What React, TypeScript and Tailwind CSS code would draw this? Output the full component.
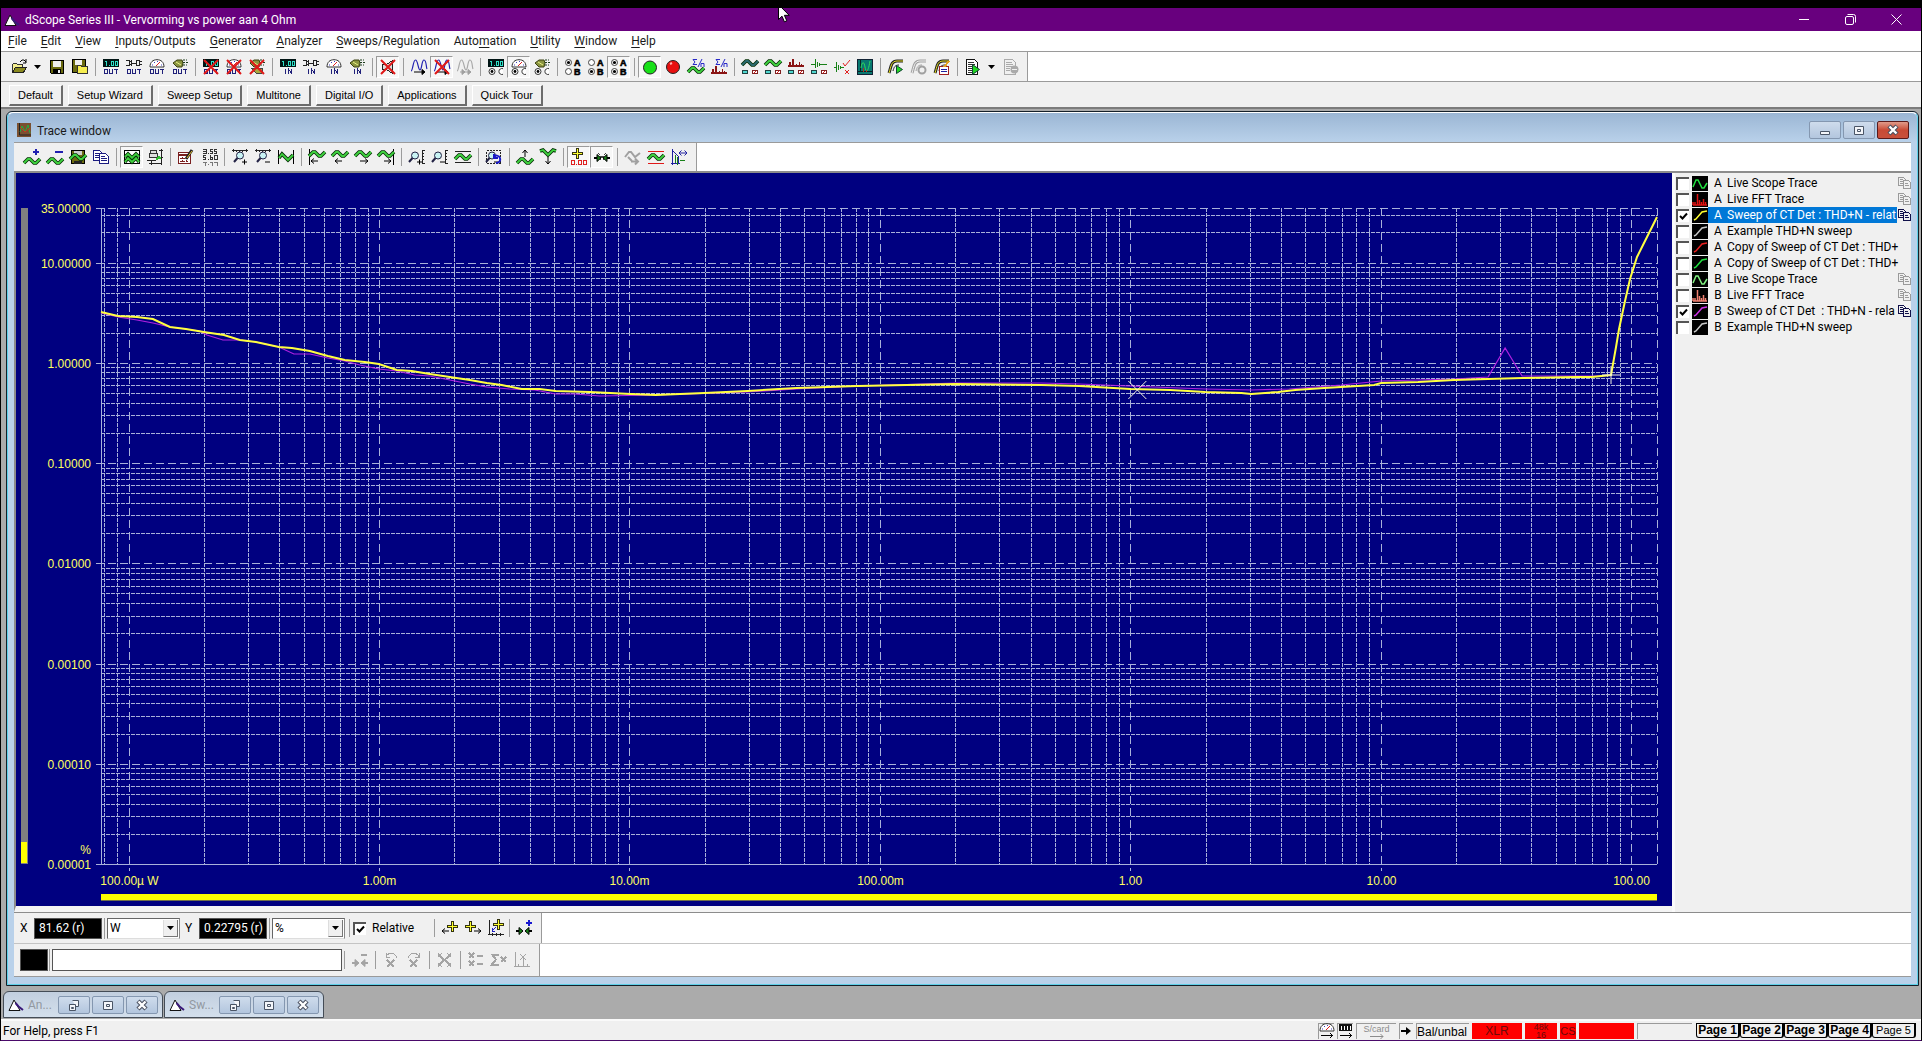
import { useLayoutEffect, useRef, useState } from 'react';
import type { ReactNode } from 'react';
import clsx from 'clsx';

type Point = [number, number];

/* ---------- icon building blocks ---------- */

function Ico({ children }: { children: ReactNode }) {
  return (
    <svg width="16" height="16" viewBox="0 0 16 16" fill="none" shapeRendering="crispEdges" className="shrink-0 overflow-visible" aria-hidden="true">
      {children}
    </svg>
  );
}

function Wave({ y = 0, x = 0, color = '#3fd23f', d = 'M0 11L4 7H6L10 11H12L16 7' }: { y?: number; x?: number; color?: string; d?: string }) {
  return (
    <g transform={`translate(${x} ${y})`} shapeRendering="auto">
      <path d={d} stroke="#063006" strokeWidth="3.6" />
      <path d={d} stroke={color} strokeWidth="1.8" />
    </g>
  );
}

const Digits = () => (
  <>
    <path d="M0 0h16v8H0z" fill="#001414" />
    <path d="M2 2.500h1.500M3.500 2v5M6 6.500h1M8.500 2.500h2v4h-2zM12.500 2.500h2v4h-2z" stroke="#2fe0c8" />
  </>
);

const Plug = () => (
  <path d="M0 1.500h3v5H0M3 2.500h2M3 5.500h2M5.500 1v6M6 4h4M10.500 1v6M11 1.500h2v5h-2M13 2.500h3M13 5.500h3" stroke="#222" />
);

const Meter = () => (
  <g shapeRendering="auto">
    <path d="M1 8C1 3 4 .7 8 .7S15 3 15 8z" fill="#fff" stroke="#333" />
    <path d="M7 7l4-4" stroke="#e02020" />
    <path d="M3 6h1M5 3.500h1M8 2.500h1M12 6h1" stroke="#4040c0" />
  </g>
);

const Speaker = () => (
  <g shapeRendering="auto">
    <path d="M1 4l4-3h5l1 3-1 4H5z" fill="#8a9440" stroke="#3a4010" />
    <path d="M4 3l5 3" stroke="#e8f080" />
    <path d="M11 1h4M11 3.500h5M11 6h4" stroke="#1b3b1b" strokeDasharray="2 1" />
  </g>
);

const Out = () => (
  <path d="M1.500 10.500h3v4h-3zM6.500 10v4.500h3V10M11 10.500h4M13 10v5" stroke="#20207a" />
);
const In = () => <path d="M5.500 10v5M8.500 15v-5l3 4.500V10" stroke="#20207a" />;

const Radios = () => (
  <g shapeRendering="auto">
    <circle cx="4" cy="12.500" r="3" fill="#fff" stroke="#333" />
    <circle cx="4" cy="12.500" r="1.400" fill="#000" />
    <path d="M15 9.700a3 3 0 1 0 0 5.600" fill="#fff" stroke="#333" />
  </g>
);

const RedCross = () => <path d="M1 1l14 14M15 1L1 15" stroke="#e01818" strokeWidth="2" shapeRendering="auto" />;

function AB({ top, bottom }: { top: boolean; bottom: boolean }) {
  return (
    <Ico>
      <g shapeRendering="auto">
        <circle cx="3.500" cy="3.500" r="3" fill="#fff" stroke="#444" />
        <circle cx="3.500" cy="12.500" r="3" fill="#fff" stroke="#444" />
        {top && <circle cx="3.500" cy="3.500" r="1.600" fill="#000" />}
        {bottom && <circle cx="3.500" cy="12.500" r="1.600" fill="#000" />}
      </g>
      <g fill="#000" stroke="#000" strokeWidth=".6" className="font-['Liberation_Sans',Arial,sans-serif] text-[9px] font-bold">
        <text x="9" y="7">A</text>
        <text x="9" y="16">B</text>
      </g>
    </Ico>
  );
}

const Floppy = () => (
  <Ico>
    <path d="M1.500 1.500h13v13h-12l-1-1z" fill="#6b6b10" stroke="#000" />
    <path d="M4 2h8v6H4z" fill="#efefef" />
    <path d="M4 10h8v5H4z" fill="#000" />
    <path d="M9 11h2v3H9z" fill="#efefef" />
  </Ico>
);

const OpenIcon = () => (
  <Ico>
    <path d="M1.500 13V5.500l1-1h3l1 1h5V8" fill="#f4ef90" stroke="#333" />
    <path d="M1.500 13.500L4.500 8.500h11l-3 5z" fill="#8a8a20" stroke="#222" />
    <path d="M9 3l2-2h2l2 2M15 0v4h-3" stroke="#000" shapeRendering="auto" />
  </Ico>
);

const SaveOpen = () => (
  <Ico>
    <path d="M.5.500h13v13h-13z" fill="#6b6b10" stroke="#000" />
    <path d="M3 1h7v5H3z" fill="#efefef" />
    <path d="M5.500 14.500v-8h3l1 1h6v7z" fill="#f6ee50" stroke="#333" />
  </Ico>
);

const Doc = () => (
  <Ico>
    <path d="M.5 1.500h6l3 3v7h-9z" fill="#fff" stroke="#1b1b80" />
    <path d="M2 4.500h4M2 6.500h5M2 8.500h5" stroke="#1b1b80" />
    <path d="M6.500 4.500h6l3 3v7h-9z" fill="#fff" stroke="#1b1b80" />
    <path d="M8 7.500h4M8 9.500h6M8 11.500h6" stroke="#1b1b80" />
  </Ico>
);

// Small copy glyph at the end of a trace row
const RowCopy = ({ color }: { color: string }) => (
  <svg width="13" height="12" viewBox="0 0 13 12" fill="#f0f0f0" stroke={color} shapeRendering="crispEdges" className="shrink-0" aria-hidden="true">
    <path d="M.5.500h5l2 2v6h-7zM2 2.500h3M2 4.500h4M2 6.500h3" />
    <path d="M5.500 3.500h5l2 2v6h-7zM7 6.500h3M7 8.500h4" />
  </svg>
);

function SineStep({ color = '#2020b0', arrow = '#000', crossed = false, twice = false }: { color?: string; arrow?: string; crossed?: boolean; twice?: boolean }) {
  return (
    <Ico>
      <g shapeRendering="auto">
        <path d="M0 12C2 12 2 1 4.500 1S7 11 9 11 10.500 1 13 1s2 7 3 9" stroke={color} strokeWidth="1.200" />
        <path d="M3 13h10M11 10.500l3 2.500-3 2.500z" stroke={arrow} fill={arrow} />
        {twice && <path d="M5 10.500l3 2.500-3 2.500z" fill={arrow} stroke={arrow} />}
      </g>
      {crossed && <RedCross />}
    </Ico>
  );
}

const SigmaN = () => (
  <path d="M7 .5H3l2 2.500-2 2.500h4M12 0L8 8M11 8V4.500h3V8" stroke="#2828c8" shapeRendering="auto" transform="translate(2 0)" />
);

const Spectrum = ({ y = 0 }: { y?: number }) => (
  <path transform={`translate(0 ${y})`} d="M0 8h16v-2h-2V5h-1v1h-1V3h-1v3h-2V5H8v1H6V0H4v6H3V3H1v3H0z" fill="#8a1414" />
);

const Chips = () => (
  <>
    <path d="M.5 11.500h5v3h-5z" fill="#4fd8d0" stroke="#204040" />
    <path d="M10.500 11.500h5v3h-5z" fill="#fff" stroke="#802020" />
    <path d="M12 14l2-2" stroke="#e02020" />
  </>
);

const Impulse = () => <path d="M0 5.500h4M4.500 0v9M6.500 3v5M8.500 4v3M9 5.500h7" stroke="#188018" />;

const Magnifier = ({ sign, x = 0 }: { sign: string; x?: number }) => (
  <g shapeRendering="auto" transform={`translate(${x} 0)`}>
    <circle cx="7" cy="6.500" r="3.500" fill="#c9f4f4" stroke="#224" />
    <path d="M4.500 9L1 13" stroke="#224" strokeWidth="2" />
    <path d={sign === '+' ? 'M9 13h5M11.500 10.500v5' : 'M9 13h5'} stroke="#000" />
  </g>
);

const RulerTop = () => <path d="M0 1.500h16M1.500 0v3M4.500 2v1M7.500 2v1M10.500 2v1M14.500 0v3" stroke="#222" />;
const RulerRight = () => <path d="M13.500 1v14M14 1.500h2M14 4.500h1M14 7.500h1M14 10.500h1M14 14.500h2" stroke="#222" />;

const Cursor = ({ x = 0, y = 0, color = '#ffff30' }: { x?: number; y?: number; color?: string }) => (
  <g transform={`translate(${x} ${y})`}>
    <path d="M5.500 0v11M0 5.500h11" stroke="#333310" strokeWidth="3" />
    <path d="M5.500 1v9M1 5.500h9" stroke={color} />
  </g>
);

const Sweep = ({ color = '#e8e020', edge = '#222' }: { color?: string; edge?: string }) => (
  <g shapeRendering="auto">
    <path d="M1 14C3 8 3 2 9 2h6" stroke={edge} strokeWidth="3" />
    <path d="M1 14C3 8 3 2 9 2h6" stroke={color} />
    <path d="M5 12c1-4 2-6 6-6" stroke={edge} />
  </g>
);

const Squeeze = ({ color = '#188018', mark = '#000' }: { color?: string; mark?: string }) => (
  <g shapeRendering="auto">
    <path d="M0 9h5M11 9h5" stroke={mark} strokeWidth="2" />
    <path d="M3 5.500L7 9l-4 3.500zM13 5.500L9 9l4 3.500z" fill={color} stroke={mark} />
  </g>
);

const AppLogo = () => (
  <svg width="16" height="14" viewBox="0 0 16 14" fill="none" className="shrink-0" aria-hidden="true">
    <path d="M1 12.500L6 2l6 10.500z" fill="#fff" stroke="#111" />
    <path d="M7.500 5l3 3.500 4.500 3.500" stroke="#3b1a7a" strokeWidth="2" />
  </svg>
);

/* ---------- toolbar parts ---------- */

function Tool({ label, pressed, children }: { label: string; pressed?: boolean; children: ReactNode }) {
  return (
    <button
      type="button"
      aria-label={label}
      title={label}
      aria-pressed={pressed}
      className={clsx(
        'flex h-[22px] w-[23px] shrink-0 items-center justify-center border',
        pressed ? 'border-b-white border-l-[#9a9a9a] border-r-white border-t-[#9a9a9a] bg-[#f7f7f7]' : 'border-transparent',
      )}
    >
      {children}
    </button>
  );
}

const Sep = () => <span className="ml-1 mr-[3px] h-[18px] w-px shrink-0 self-center bg-[#9c9c9c]" />;

function MenuArrow() {
  return (
    <button type="button" aria-label="More" className="flex h-[22px] w-[15px] shrink-0 items-center justify-center">
      <svg width="7" height="4" viewBox="0 0 7 4" aria-hidden="true">
        <path d="M0 0h7L3.500 4z" fill="#000" />
      </svg>
    </button>
  );
}

function MainToolbar() {
  return (
    <div role="toolbar" aria-label="Main" className="flex h-[30px] shrink-0 border-b border-[#9a9a9a] bg-white">
      <div className="flex items-center border-r border-[#9a9a9a] bg-[#f0f0f0] pl-[6px] pr-[5px]">
        <Tool label="Open"><OpenIcon /></Tool>
        <MenuArrow />
        <Tool label="Save"><Floppy /></Tool>
        <Tool label="Save configuration"><SaveOpen /></Tool>
        <Sep />
        <Tool label="Output level"><Ico><Digits /><Out /></Ico></Tool>
        <Tool label="Output connector"><Ico><Plug /><Out /></Ico></Tool>
        <Tool label="Output meter"><Ico><Meter /><Out /></Ico></Tool>
        <Tool label="Output monitor"><Ico><Speaker /><Out /></Ico></Tool>
        <Sep />
        <Tool label="Mute digital output"><Ico><Digits /><Out /><RedCross /></Ico></Tool>
        <Tool label="Mute analogue output"><Ico><Meter /><Out /><RedCross /></Ico></Tool>
        <Tool label="Mute monitor"><Ico><Speaker /><path d="M2 9l5 5h6l1-5z" fill="#a8a840" stroke="#444" /><RedCross /></Ico></Tool>
        <Sep />
        <Tool label="Input level"><Ico><Digits /><In /></Ico></Tool>
        <Tool label="Input connector"><Ico><Plug /><In /></Ico></Tool>
        <Tool label="Input meter"><Ico><Meter /><In /></Ico></Tool>
        <Tool label="Input monitor"><Ico><Speaker /><In /></Ico></Tool>
        <Sep />
        <Tool label="Mute speaker" pressed>
          <Ico>
            <path d="M2.500 5.500h4l6-4v13l-6-4h-4z" fill="#ddd" stroke="#222" />
            <RedCross />
          </Ico>
        </Tool>
        <Sep />
        <Tool label="Generator on"><SineStep /></Tool>
        <Tool label="Generator off" pressed><SineStep crossed /></Tool>
        <Tool label="Generator step"><SineStep color="#a8a8a8" arrow="#a0a0a0" twice /></Tool>
        <Sep />
        <Tool label="Digital channel"><Ico><Digits /><Radios /></Ico></Tool>
        <Tool label="Meter channel" pressed><Ico><Meter /><Radios /></Ico></Tool>
        <Tool label="Monitor channel"><Ico><Speaker /><Radios /></Ico></Tool>
        <Sep />
        <Tool label="Channel A"><AB top bottom={false} /></Tool>
        <Tool label="Channel B"><AB top={false} bottom /></Tool>
        <Tool label="Channels A and B" pressed><AB top bottom /></Tool>
        <Sep />
        <Tool label="Run" pressed>
          <Ico><circle cx="8" cy="8.500" r="6.500" fill="#18e018" stroke="#222" shapeRendering="auto" /></Ico>
        </Tool>
        <Tool label="Stop">
          <Ico>
            <g shapeRendering="auto">
              <circle cx="8" cy="8" r="6.500" fill="#e81010" stroke="#222" />
              <path d="M5 5l2-1" stroke="#ffb0b0" strokeWidth="2" />
            </g>
          </Ico>
        </Tool>
        <Tool label="Average scope"><Ico><SigmaN /><Wave y={2} /></Ico></Tool>
        <Tool label="Average spectrum"><Ico><SigmaN /><Spectrum y={7} /></Ico></Tool>
        <Sep />
        <Tool label="Time detector"><Ico><Wave y={-5} color="#2a6a70" /><Chips /></Ico></Tool>
        <Tool label="Trace detector"><Ico><Wave y={-5} /><Chips /></Ico></Tool>
        <Tool label="FFT detector"><Ico><Spectrum /><Chips /></Ico></Tool>
        <Tool label="Impulse detector"><Ico><Impulse /><Chips /></Ico></Tool>
        <Tool label="Limit check">
          <Ico>
            <path d="M0 8.500h2M2.500 3v10M4.500 6v5M6.500 7v3M7 8.500h3" stroke="#188018" />
            <path d="M9 4l2 3 5-6M11 11l4 4M15 11l-4 4" stroke="#e02020" shapeRendering="auto" />
          </Ico>
        </Tool>
        <Tool label="Trace window">
          <Ico>
            <path d="M.5.500h15v15H.5z" fill="#087870" stroke="#123" />
            <path d="M3.500 1v12M1 12.500h14" stroke="#082020" />
            <path d="M4 9c1-7 3-7 4-1s3 6 5-6" stroke="#30d860" shapeRendering="auto" />
            <path d="M6.500 13V9M9.500 13v-2" stroke="#b03020" />
          </Ico>
        </Tool>
        <Sep />
        <Tool label="Run sweep"><Ico><Sweep /><path d="M8.500 6.500l6 4-6 4z" fill="#20d820" stroke="#143" shapeRendering="auto" /></Ico></Tool>
        <Tool label="Stop sweep">
          <Ico>
            <Sweep color="#f0f0f0" edge="#a0a0a0" />
            <circle cx="11" cy="11" r="3.500" fill="#f0f0f0" stroke="#a0a0a0" strokeWidth="2" shapeRendering="auto" />
          </Ico>
        </Tool>
        <Tool label="Sweep settings">
          <Ico>
            <Sweep />
            <path d="M5.500 7.500h9v8h-9z" fill="#fff" stroke="#a02020" />
            <path d="M7 10.500h6M7 12.500h6" stroke="#2020a0" />
            <path d="M10 8l5-6" stroke="#e0a020" strokeWidth="2" />
          </Ico>
        </Tool>
        <Sep />
        <Tool label="Run script">
          <Ico>
            <path d="M1.500.500h8l3 3v12h-11z" fill="#fff" stroke="#111" />
            <path d="M3 3.500h6M3 5.500h7M3 7.500h7M3 9.500h4M3 11.500h4M3 13.500h7" stroke="#333" />
            <path d="M7.500 5.500l7 5-7 5z" fill="#20d820" stroke="#143" shapeRendering="auto" />
          </Ico>
        </Tool>
        <MenuArrow />
        <Tool label="Stop script">
          <Ico>
            <path d="M1.500.500h8l3 3v12h-11z" stroke="#aaa" />
            <path d="M3 3.500h6M3 5.500h7M3 7.500h7M3 9.500h4M3 11.500h4" stroke="#aaa" />
            <circle cx="11.500" cy="10.500" r="4" fill="#aaa" shapeRendering="auto" />
            <path d="M9 10.500h5" stroke="#f0f0f0" />
          </Ico>
        </Tool>
      </div>
    </div>
  );
}

function TraceToolbar() {
  return (
    <div role="toolbar" aria-label="Trace" className="flex h-[31px] shrink-0 border-b-2 border-t border-b-[#8c8c8c] border-t-[#9a9a9a] bg-white">
      <div className="flex items-center border-r border-[#9a9a9a] bg-[#f0f0f0] pl-[6px] pr-[6px]">
        <Tool label="Add trace"><Ico><Wave y={3} /><path d="M12 0v6M9 3h6" stroke="#2020b0" strokeWidth="2" /></Ico></Tool>
        <Tool label="Remove trace"><Ico><Wave y={3} /><path d="M8 3h8" stroke="#2020b0" strokeWidth="2" /></Ico></Tool>
        <Tool label="Save trace">
          <Ico>
            <path d="M1.500 1.500h13v13h-13z" fill="#6b6b10" stroke="#000" />
            <path d="M4 2h8v4H4z" fill="#ccc" />
            <path d="M4 12h8v3H4z" fill="#222" />
            <Wave y={-1} />
          </Ico>
        </Tool>
        <Tool label="Copy"><Doc /></Tool>
        <Sep />
        <Tool label="Graph view" pressed>
          <Ico>
            <path d="M.5 1.500h15v13H.5z" fill="#fff" stroke="#000" />
            <Wave y={-3} d="M1 11L4 8L8 12L12 8L15 11" />
            <Wave y={2} d="M1 11L4 7L8 11L12 7L15 11" />
          </Ico>
        </Tool>
        <Tool label="Print trace">
          <Ico>
            <path d="M2.500 4.500h8v4h-8zM3.500 1.500h6v3h-6z" fill="#ddd" stroke="#333" />
            <path d="M0 11.500h9M14.500 0v16M12 1.500h4M12 8.500h4M2 14.500h12M4.500 12v4" stroke="#222" />
            <path d="M9 11l3-3 2 2" stroke="#30c030" strokeWidth="2" />
          </Ico>
        </Tool>
        <Sep />
        <Tool label="Trace settings">
          <Ico>
            <path d="M.5 3.500h12v11H.5z" fill="#fff" stroke="#7a2020" />
            <path d="M1 5.500h11" stroke="#7a2020" strokeWidth="2" />
            <path d="M2 9.500h9M2 12.500h9M4.500 8v6M8.500 8v6" stroke="#7a2020" strokeDasharray="2 1" />
            <path d="M8 10l6-9" stroke="#222" strokeWidth="3" shapeRendering="auto" />
            <path d="M9 9l5-7" stroke="#e8c030" shapeRendering="auto" />
          </Ico>
        </Tool>
        <Tool label="Show values">
          <Ico>
            <path d="M2 .5h3v4M2 2.500h3M2 4.500h3M7 4.500h1M9 .5h3M9.500 0v2.500h2.500M11.500 2v2.500H9M13 .5h3M13.500 0v2.500h2v2H13" stroke="#333" />
            <path d="M2 6.500h3M2.500 6v2.500h2v2H2M7 10.500h1M9.500 6v4.500h2v-2h-2M13 6.500h3v4h-3z" stroke="#333" />
            <path d="M2 13.500h3l-1 3M7 15.500h1M9 13.500h2v3M13 13.500h3v3" stroke="#777" />
          </Ico>
        </Tool>
        <Sep />
        <Tool label="Zoom in X"><Ico><RulerTop /><Magnifier sign="+" x={1} /></Ico></Tool>
        <Tool label="Zoom out X"><Ico><RulerTop /><Magnifier sign="-" x={1} /></Ico></Tool>
        <Tool label="Fit X"><Ico><path d="M.5 1v14M15.500 1v14" stroke="#000" /><Wave y={-1} d="M1 10L4 6L10 12L15 7" /></Ico></Tool>
        <Sep />
        <Tool label="Scroll to start"><Ico><path d="M.5 0v16M2 12h7M5 9.500L2 12l3 2.500" stroke="#000" shapeRendering="auto" /><Wave y={-4} /></Ico></Tool>
        <Tool label="Scroll left"><Ico><path d="M3 12h7M6 9.500L3 12l3 2.500" stroke="#000" shapeRendering="auto" /><Wave y={-4} /></Ico></Tool>
        <Tool label="Scroll right"><Ico><path d="M5 12h8M10 9.500l3 2.500-3 2.500" stroke="#000" shapeRendering="auto" /><Wave y={-4} /></Ico></Tool>
        <Tool label="Scroll to end"><Ico><path d="M15.500 0v16M6 12h7M10 9.500l3 2.500-3 2.500" stroke="#000" shapeRendering="auto" /><Wave y={-4} /></Ico></Tool>
        <Sep />
        <Tool label="Zoom in Y"><Ico><RulerRight /><Magnifier sign="+" x={-1} /></Ico></Tool>
        <Tool label="Zoom out Y"><Ico><RulerRight /><Magnifier sign="-" x={-1} /></Ico></Tool>
        <Tool label="Fit Y"><Ico><path d="M0 2.500h16M0 13.500h16" stroke="#222" /><Wave y={-1} /></Ico></Tool>
        <Sep />
        <Tool label="Undo zoom">
          <Ico>
            <path d="M.5 1.500h14v13H.5z" stroke="#222" strokeDasharray="2 1" />
            <Magnifier sign="-" x={-1} />
            <path d="M8 8c1-2 5-2 6 1s-1 5-4 5M8 5v4h4" stroke="#1818c8" strokeWidth="2" shapeRendering="auto" />
          </Ico>
        </Tool>
        <Sep />
        <Tool label="Move up"><Ico><path d="M8 8V1M5.500 4L8 1l2.500 3" stroke="#000" shapeRendering="auto" /><Wave y={3} /></Ico></Tool>
        <Tool label="Move down"><Ico><path d="M8 8v7M5.500 12L8 15l2.500-3" stroke="#000" shapeRendering="auto" /><Wave y={-4} d="M0 6L3 5L8 10L13 5L16 6" /></Ico></Tool>
        <Sep />
        <Tool label="Show cursor" pressed>
          <Ico>
            <Cursor x={1} y={-1} />
            <path d="M.5 11.500h3v4h-3zM5 15.500h1M7.500 11.500h3v4h-3zM12.500 11.500h3v4h-3z" stroke="#e02020" />
          </Ico>
        </Tool>
        <Tool label="Show marks" pressed><Ico><Squeeze /><path d="M4 4l8 9M12 4l-8 9" stroke="#444" strokeDasharray="1 1" /></Ico></Tool>
        <Sep />
        <Tool label="Smooth"><Ico><g shapeRendering="auto" stroke="#a0a0a0" strokeWidth="2"><path d="M0 8L4 3H6L10 8L15 4M3 8l4 4" /><path d="M6 12.500h7M10 9.500l3 3-3 3" /></g></Ico></Tool>
        <Tool label="Limits"><Ico><path d="M0 2.500h16M0 14.500h16" stroke="#e01818" /><Wave y={-1} /></Ico></Tool>
        <Tool label="Normalise"><Ico><path d="M1.500 0v16M0 14.500h9M2 2l5 5v7" stroke="#2020a0" /><path d="M4.500 6v8M6.500 8v8M9 11.500h5" stroke="#188018" /><path d="M8 4h8M10.500 1.500L8 4l2.500 2.500M13.500 1.500L16 4l-2.500 2.500" stroke="#2020a0" shapeRendering="auto" /></Ico></Tool>
      </div>
    </div>
  );
}

/* ---------- chart ---------- */

// Traces are kept in plot space, measured on a 1557 x 656 plot.
const SPAN_X = 1557;
const SPAN_Y = 656;

const TRACE_A: Point[] = [
  [0, 104], [17, 108], [36, 109], [52, 111], [69, 119], [85, 121], [103, 124], [123, 127], [139, 132], [155, 134], [178, 139],
  [191, 140], [209, 143], [227, 148], [244, 152], [264, 154], [278, 156], [296, 162], [311, 163], [329, 166], [349, 169], [369, 172],
  [386, 175], [401, 177], [421, 181], [439, 181], [455, 183], [489, 184], [530, 186], [555, 187], [604, 185], [647, 183], [696, 180],
  [757, 178], [855, 176], [941, 177], [979, 178], [1030, 181], [1070, 182], [1105, 184], [1141, 185], [1151, 186], [1178, 184],
  [1195, 182], [1224, 180], [1241, 179], [1274, 177], [1281, 175], [1318, 174], [1354, 172], [1388, 171], [1423, 170], [1476, 169],
  [1492, 169], [1511, 167], [1516, 139], [1519, 121], [1525, 93], [1530, 71], [1537, 49], [1547, 29], [1557, 9],
];

const TRACE_B: Point[] = [
  [0, 105], [17, 109], [36, 112], [52, 115], [69, 119], [99, 123], [106, 127], [122, 132], [139, 132], [155, 134], [178, 139],
  [193, 146], [209, 146], [227, 150], [244, 153], [259, 157], [278, 161], [296, 163], [314, 167], [329, 168], [349, 172], [369, 176],
  [386, 179], [409, 181], [434, 182], [455, 186], [474, 186], [499, 188], [555, 187], [647, 184], [696, 181], [757, 178], [855, 175],
  [941, 175], [979, 176], [1054, 179], [1105, 181], [1151, 182], [1189, 181], [1241, 177], [1281, 173], [1354, 171], [1388, 169],
  [1405, 140], [1422, 168], [1460, 168], [1499, 168], [1511, 167],
];

const Y_MAX = Math.log10(35);
const Y_MIN = -5;
const X_MIN = Math.log10(0.0000775);
const X_MAX = Math.log10(127);

const Y_LABELS: [number, string][] = [
  [35, '35.00000'], [10, '10.00000'], [1, '1.00000'], [0.1, '0.10000'], [0.01, '0.01000'], [0.001, '0.00100'], [0.0001, '0.00010'], [0.00001, '0.00001'],
];
const X_LABELS: [number, string][] = [
  [0.0001, '100.00µ W'], [0.001, '1.00m'], [0.01, '10.00m'], [0.1, '100.00m'], [1, '1.00'], [10, '10.00'], [100, '100.00'],
];

function logTicks(min: number, max: number) {
  const ticks: { log: number; major: boolean }[] = [];
  for (let decade = Math.floor(min); decade <= max; decade++) {
    for (let n = 1; n < 10; n++) {
      const log = decade + Math.log10(n);
      if (log > min && log < max) ticks.push({ log, major: n === 1 });
    }
  }
  return ticks;
}

function TraceChart() {
  const ref = useRef<SVGSVGElement>(null);
  const [size, setSize] = useState({ width: 1657, height: 733 });

  useLayoutEffect(() => {
    const el = ref.current;
    if (!el) return;
    const measure = () => {
      const box = el.getBoundingClientRect();
      setSize({ width: box.width, height: box.height });
    };
    measure();
    const observer = new ResizeObserver(measure);
    observer.observe(el);
    return () => observer.disconnect();
  }, []);

  const left = 85;
  const top = 35;
  const right = size.width - 15;
  const bottom = size.height - 42;
  const px = (log: number) => Math.round(left + ((log - X_MIN) / (X_MAX - X_MIN)) * (right - left)) + 0.5;
  const py = (log: number) => Math.round(top + ((Y_MAX - log) / (Y_MAX - Y_MIN)) * (bottom - top)) + 0.5;
  const place = ([x, y]: Point): Point => [left + (x / SPAN_X) * (right - left), top + (y / SPAN_Y) * (bottom - top)];
  const line = (points: Point[]) => points.map((p) => place(p).join(',')).join(' ');
  const [markX, markY] = place([1037, 182]);
  const [cursorX, cursorY] = place([1511, 167]);

  return (
    <svg ref={ref} role="img" aria-label="Distortion against power" className="min-w-0 flex-1 bg-[#000080]">
      <rect x="5" y={top} width="7" height={bottom - top} fill="#808080" />
      <rect x="5" y={bottom - 22} width="6" height="21" fill="#ffff00" />
      <g stroke="#a9b1da" fill="none" shapeRendering="crispEdges">
        {logTicks(Y_MIN, Y_MAX).map(({ log, major }) => (
          <line key={log} x1={major ? left - 5 : left} x2={right} y1={py(log)} y2={py(log)} strokeDasharray={major ? '8 4' : '4 1'} />
        ))}
        {logTicks(X_MIN, X_MAX).map(({ log, major }) => (
          <line key={log} x1={px(log)} x2={px(log)} y1={top} y2={major ? bottom + 7 : bottom} strokeDasharray={major ? '8 4' : '4 1'} />
        ))}
        <path d={`M${left - 5} ${top + 0.5}H${right}`} strokeDasharray="8 4" />
        <path d={`M${right + 0.5} ${top}V${bottom}`} strokeDasharray="8 4" />
        <path d={`M${left + 0.5} ${top}V${bottom + 0.5}H${right}M${left - 5} ${bottom + 0.5}H${left}`} />
      </g>
      <polyline points={line(TRACE_B)} fill="none" stroke="#b020e0" strokeWidth="1.2" />
      <polyline points={line(TRACE_A)} fill="none" stroke="#ffff40" strokeWidth="2" />
      <path
        d={`M${markX - 9} ${markY - 9}l18 18m0-18l-18 18M${cursorX - 9} ${cursorY}h18M${cursorX} ${cursorY - 9}v18`}
        fill="none"
        stroke="#f4f4e0"
      />
      <g fill="#ffff60" className="font-['Liberation_Sans',Arial,sans-serif] text-[12px]">
        {Y_LABELS.map(([value, text]) => (
          <text key={text} x={left - 10} y={py(Math.log10(value)) + 4} textAnchor="end">{text}</text>
        ))}
        <text x={left - 10} y={bottom - 10} textAnchor="end">%</text>
        {X_LABELS.map(([value, text]) => (
          <text key={text} x={px(Math.log10(value))} y={bottom + 21} textAnchor="middle">{text}</text>
        ))}
      </g>
      <rect x={left} y={bottom + 30} width={right - left} height="6" fill="#ffff00" />
      <rect x={left} y={bottom + 36} width={right - left} height="1" fill="#70704a" />
    </svg>
  );
}

/* ---------- trace list ---------- */

type Trace = { channel: string; name: string; kind: 'scope' | 'fft' | 'sweep'; color: string; checked?: boolean; selected?: boolean; copy?: 'on' | 'off' };

const TRACES: Trace[] = [
  { channel: 'A', name: 'Live Scope Trace', kind: 'scope', color: '#20e040', copy: 'off' },
  { channel: 'A', name: 'Live FFT Trace', kind: 'fft', color: '#e01010', copy: 'off' },
  { channel: 'A', name: 'Sweep of CT Det : THD+N - relat', kind: 'sweep', color: '#ffff30', checked: true, selected: true, copy: 'on' },
  { channel: 'A', name: 'Example THD+N sweep', kind: 'sweep', color: '#c8c8c8' },
  { channel: 'A', name: 'Copy of Sweep of CT Det : THD+', kind: 'sweep', color: '#e82020' },
  { channel: 'A', name: 'Copy of Sweep of CT Det : THD+', kind: 'sweep', color: '#20e040' },
  { channel: 'B', name: 'Live Scope Trace', kind: 'scope', color: '#80f080', copy: 'off' },
  { channel: 'B', name: 'Live FFT Trace', kind: 'fft', color: '#f08070', copy: 'off' },
  { channel: 'B', name: 'Sweep of CT Det  : THD+N - rela', kind: 'sweep', color: '#d030e8', checked: true, copy: 'on' },
  { channel: 'B', name: 'Example THD+N sweep', kind: 'sweep', color: '#c8c8c8' },
];

const KIND_PATHS = {
  scope: 'M1 11L4 4H6L10 12H12L15 7',
  fft: 'M1 13V10M3 13V10M5.500 13V2M7.500 13V8M9.500 13V10M11.500 13V7M13.500 13V10M1 13H15',
  sweep: 'M2 12L4 11L10 4L15 3',
};

function Tick({ id, label, checked }: { id: string; label?: string; checked?: boolean }) {
  return (
    <span className="relative flex h-[13px] w-[13px] shrink-0">
      <input
        id={id}
        type="checkbox"
        aria-label={label}
        defaultChecked={checked}
        className="peer h-[13px] w-[13px] appearance-none border-l-2 border-t-2 border-[#555] bg-white"
      />
      <svg width="9" height="9" viewBox="0 0 9 9" fill="none" className="pointer-events-none absolute left-[3px] top-[3px] hidden peer-checked:block" aria-hidden="true">
        <path d="M1 4l2.500 2.500L8 1.500" stroke="#000" strokeWidth="2" />
      </svg>
    </span>
  );
}

function TraceList() {
  return (
    <ul className="w-[239px] shrink-0 overflow-hidden border-l-[3px] border-[#fafafa] bg-[#f0f0f0] pl-px pt-[2px]">
      {TRACES.map((trace, i) => (
        <li key={i} className="flex h-4 items-center">
          <Tick id={`trace-${i}`} label={`Show ${trace.channel} ${trace.name}`} checked={trace.checked} />
          <svg width="16" height="15" viewBox="0 0 16 15" fill="none" className="ml-[3px] shrink-0" aria-hidden="true">
            <path d="M0 0h16v15H0z" fill="#000" />
            <path d={KIND_PATHS[trace.kind]} stroke={trace.color} strokeWidth="1.500" />
          </svg>
          <span
            className={clsx(
              'flex h-4 min-w-0 flex-1 items-center gap-[5px] overflow-hidden pl-[6px] text-[12px] leading-4',
              trace.selected ? 'bg-[#0078d7] text-white' : 'text-black',
            )}
          >
            <span className="w-2 shrink-0 text-center">{trace.channel}</span>
            <span className="whitespace-pre">{trace.name}</span>
          </span>
          {trace.copy && (
            <span className="flex w-[14px] shrink-0 justify-center">
              <RowCopy color={trace.copy === 'on' ? '#10104a' : '#9a9a9a'} />
            </span>
          )}
        </li>
      ))}
    </ul>
  );
}

/* ---------- readout bars ---------- */

function UnitSelect({ label, value, options }: { label: string; value: string; options: string[] }) {
  return (
    <span className="relative flex h-[21px] w-[73px] shrink-0">
      <select
        aria-label={label}
        defaultValue={value}
        className="h-full w-full appearance-none border border-b-[#ddd] border-l-[#666] border-r-[#888] border-t-[#666] bg-white pl-[2px] text-[12px] leading-4 text-black"
      >
        {options.map((option) => (
          <option key={option}>{option}</option>
        ))}
      </select>
      <span className="pointer-events-none absolute bottom-[2px] right-[2px] top-[2px] flex w-[15px] items-center justify-center border-b border-l border-r border-b-[#777] border-l-[#ddd] border-r-[#777] bg-[#f0f0f0]">
        <svg width="7" height="4" viewBox="0 0 7 4" aria-hidden="true">
          <path d="M0 0h7L3.500 4z" fill="#000" />
        </svg>
      </span>
    </span>
  );
}

function Readout({ id, label, value }: { id: string; label: string; value: string }) {
  return (
    <>
      <label htmlFor={id} className="w-[14px] shrink-0 text-[12px] leading-4">{label}</label>
      <input
        id={id}
        readOnly
        value={value}
        className="h-[21px] w-[68px] shrink-0 border border-[#555] bg-black pl-1 text-[12px] leading-4 text-white"
      />
    </>
  );
}

function CursorBar() {
  return (
    <div className="flex h-[31px] shrink-0 border-b border-[#c4c4c4] bg-white">
      <div className="flex items-center border-r border-[#9a9a9a] bg-[#f0f0f0] pl-[6px] pr-[6px]">
        <Readout id="cursor-x" label="X" value="81.62 (r)" />
        <span className="mx-[2px] h-[21px] w-px bg-[#9c9c9c]" />
        <UnitSelect label="X unit" value="W" options={['W', 'V', 'dBV']} />
        <span className="w-[5px]" />
        <Readout id="cursor-y" label="Y" value="0.22795 (r)" />
        <span className="mx-[2px] h-[21px] w-px bg-[#9c9c9c]" />
        <UnitSelect label="Y unit" value="%" options={['%', 'dB']} />
        <Sep />
        <Tick id="relative" checked />
        <label htmlFor="relative" className="ml-[6px] w-[58px] text-[12px] leading-4">Relative</label>
        <Sep />
        <Tool label="Cursor left"><Ico><Cursor x={5} y={1} /><path d="M0 11h7M3 8.500L0 11l3 2.500" stroke="#000" shapeRendering="auto" /></Ico></Tool>
        <Tool label="Cursor right"><Ico><Cursor y={1} /><path d="M9 11h7M13 8.500l3 2.500-3 2.500" stroke="#000" shapeRendering="auto" /></Ico></Tool>
        <Tool label="Cursor to origin"><Ico><path d="M1.500 0v15M0 14.500h16M4.500 13v3M8.500 13v3M12.500 13v3" stroke="#222" /><Cursor x={5} y={-1} /><path d="M8 7l-4 4M4 8v3h3" stroke="#2020c0" /></Ico></Tool>
        <span className="mx-[2px] h-[18px] w-px bg-[#9c9c9c]" />
        <Tool label="Add mark"><Ico><g transform="translate(0 2)"><Squeeze /></g><path d="M12.500 0v6M9.500 3h6" stroke="#1818d0" strokeWidth="2" /></Ico></Tool>
      </div>
    </div>
  );
}

const GREY = '#a4a4a4';

function MarkBar() {
  return (
    <div className="flex h-[33px] shrink-0 border-b border-[#9a9a9a] bg-white">
      <div className="flex items-center border-r border-[#9a9a9a] bg-[#f0f0f0] pl-[6px] pr-[6px]">
        <button type="button" aria-label="Mark colour" className="h-[22px] w-7 border border-[#555] bg-black" />
        <span className="ml-px mr-[2px] h-[22px] w-px bg-[#9c9c9c]" />
        <input aria-label="Mark name" className="h-[22px] w-[290px] border border-[#555] bg-white px-1 text-[12px]" />
        <span className="ml-[2px] mr-[3px] h-[18px] w-px bg-[#9c9c9c]" />
        <Tool label="Remove mark"><Ico><g transform="translate(0 2)"><Squeeze color={GREY} mark={GREY} /></g><path d="M9 3h6" stroke={GREY} strokeWidth="2" /></Ico></Tool>
        <Sep />
        <Tool label="Previous mark"><Ico><path d="M3 5c2-5 9-5 11 1M3 1v4h4" stroke={GREY} /><path d="M4 8l7 7M11 8l-7 7" stroke={GREY} strokeWidth="2" /></Ico></Tool>
        <Tool label="Next mark"><Ico><path d="M13 5C11 0 4 0 2 6M13 1v4H9" stroke={GREY} /><path d="M4 8l7 7M11 8l-7 7" stroke={GREY} strokeWidth="2" /></Ico></Tool>
        <Sep />
        <Tool label="Clear marks"><Ico><path d="M1 2l13 12M14 2L1 14" stroke={GREY} strokeWidth="2" /><path d="M1 5l4-4M10 1l4 4M1 11l4 4M10 15l4-4" stroke={GREY} /></Ico></Tool>
        <Sep />
        <Tool label="List marks"><Ico><path d="M1 1l5 5M6 1L1 6M1 9l5 5M6 9l-5 5M9 4h6M9 12h6" stroke={GREY} strokeWidth="1.500" /></Ico></Tool>
        <Tool label="Sum marks"><Ico><path d="M8 2.500H1l4 5-4 5h7" stroke={GREY} strokeWidth="2" /><path d="M10 5l5 5M15 5l-5 5" stroke={GREY} strokeWidth="1.500" /></Ico></Tool>
        <Tool label="Peak mark"><Ico><path d="M1.500 0v15M0 14.500h16M9 5v9M6 2l6 6M12 2L6 8M4.500 12v2M13.500 12v2" stroke={GREY} /></Ico></Tool>
      </div>
    </div>
  );
}

/* ---------- windows ---------- */

const FRAME_ICONS = {
  minimise: 'M3.500 8.500h9v3h-9z',
  restore: 'M6.500 2.500h6v6h-3M3.500 6.500h6v6h-6zM5.500 9.500h2v1h-2z',
  maximise: 'M3.500 3.500h9v8h-9zM6.500 6.500h3v2h-3z',
};

function FrameButton({ kind, danger }: { kind: 'minimise' | 'restore' | 'maximise' | 'close'; danger?: boolean }) {
  return (
    <button
      type="button"
      aria-label={kind}
      className={clsx(
        'flex h-[18px] w-8 shrink-0 items-center justify-center rounded-[2px] border',
        danger ? 'border-[#5a1a1a] bg-linear-to-b from-[#e09a8a] via-[#c84a35] to-[#c8503c]' : 'border-[#8497b0] bg-linear-to-b from-[#cfdcec] to-[#b3c6de]',
      )}
    >
      <svg width="16" height="14" viewBox="0 0 16 14" fill="none" aria-hidden="true">
        {kind === 'close' ? (
          <>
            <path d="M4 3l8 8M12 3l-8 8" stroke="#4a5060" strokeWidth="4.500" />
            <path d="M4.500 3.500l7 7M11.500 3.500l-7 7" stroke="#fff" strokeWidth="2.400" />
          </>
        ) : (
          <path d={FRAME_ICONS[kind]} stroke="#4a5566" fill="#f4f6fa" />
        )}
      </svg>
    </button>
  );
}

function TraceWindow() {
  return (
    <section className="ml-[5px] mr-[2px] mt-[2px] flex min-h-0 flex-1 flex-col rounded-t-md border border-[#15202a] bg-[#b9d1ea]">
      <div className="flex min-h-0 flex-1 flex-col rounded-t-md border border-[#5fd0e8] border-t-white px-[6px] pb-[7px]">
        <header className="-mx-[6px] flex h-[29px] shrink-0 items-center rounded-t-md bg-linear-to-b from-[#9bb6d4] to-[#b9d1ea] pl-[9px] pr-2">
          <svg width="14" height="14" viewBox="0 0 14 14" fill="none" className="mt-1" aria-hidden="true">
            <path d="M0 0h14v14H0z" fill="#7a5030" />
            <path d="M2.500 0v12H14" stroke="#222" />
            <path d="M3 9l2-6 3 6 3-7 2 8" stroke="#20b040" />
            <path d="M3 4l5 5 5-4" stroke="#d03020" />
          </svg>
          <h2 className="ml-[6px] mt-[6px] flex-1 text-[12px] leading-4 text-[#1a1a1a]">Trace window</h2>
          <div className="mt-1 flex gap-[2px]">
            <FrameButton kind="minimise" />
            <FrameButton kind="maximise" />
            <FrameButton kind="close" danger />
          </div>
        </header>
        <TraceToolbar />
        <div className="flex min-h-0 flex-1 border-b border-[#8c8c8c] bg-[#f0f0f0]">
          <div className="flex min-w-0 flex-1 border-b-[6px] border-l-2 border-b-[#f4f4f4] border-l-[#8c8c8c]">
            <TraceChart />
          </div>
          <TraceList />
        </div>
        <CursorBar />
        <MarkBar />
      </div>
    </section>
  );
}

function MinimisedWindow({ title }: { title: string }) {
  return (
    <div className="flex h-[27px] w-40 items-center rounded-t-md border border-[#444c56] bg-linear-to-b from-[#c2cfdf] to-[#d3dfec] pl-1 pr-1">
      <AppLogo />
      <span className="ml-1 flex-1 text-[12px] leading-4 text-[#9298a0]">{title}</span>
      <div className="flex gap-[2px]">
        <FrameButton kind="restore" />
        <FrameButton kind="maximise" />
        <FrameButton kind="close" />
      </div>
    </div>
  );
}

/* ---------- application frame ---------- */

const MENUS: [string, string, string][] = [
  ['', 'F', 'ile'], ['', 'E', 'dit'], ['', 'V', 'iew'], ['', 'I', 'nputs/Outputs'], ['', 'G', 'enerator'], ['', 'A', 'nalyzer'],
  ['', 'S', 'weeps/Regulation'], ['Auto', 'm', 'ation'], ['', 'U', 'tility'], ['', 'W', 'indow'], ['', 'H', 'elp'],
];

const SHORTCUTS = ['Default', 'Setup Wizard', 'Sweep Setup', 'Multitone', 'Digital I/O', 'Applications', 'Quick Tour'];

function TitleBar() {
  return (
    <header className="flex h-[23px] shrink-0 items-center bg-[#68007e] pl-[3px] text-white">
      <AppLogo />
      <h1 className="ml-[5px] flex-1 text-[12px] leading-4">dScope Series III - Vervorming vs power aan 4 Ohm</h1>
      <button type="button" aria-label="Minimise" className="flex w-[46px] justify-center">
        <svg width="11" height="11" viewBox="0 0 11 11" stroke="#fff" aria-hidden="true"><path d="M0 5.500h10" /></svg>
      </button>
      <button type="button" aria-label="Restore" className="flex w-[46px] justify-center">
        <svg width="11" height="11" viewBox="0 0 11 11" fill="none" stroke="#fff" aria-hidden="true">
          <rect x=".5" y="2.500" width="8" height="8" rx="1.500" />
          <path d="M2.500.500h6q2 0 2 2v6" />
        </svg>
      </button>
      <button type="button" aria-label="Close" className="mr-[2px] flex w-[46px] justify-center">
        <svg width="11" height="11" viewBox="0 0 11 11" stroke="#fff" aria-hidden="true"><path d="M.5.500l10 10M10.500.500l-10 10" /></svg>
      </button>
    </header>
  );
}

function StatusBar() {
  return (
    <footer className="flex h-[21px] shrink-0 items-center border-t-2 border-[#fafafa] bg-[#f0f0f0] pl-[2px] pr-[5px] font-['Liberation_Sans',Arial,sans-serif] text-[12px] leading-4 text-black">
      <span className="flex-1 font-['Roboto',sans-serif]">For Help, press F1</span>
      <div className="flex h-4 items-center gap-[3px]">
        <span className="flex h-4 w-4 items-center border-l border-t border-[#9a9a9a]">
          <Ico><Meter /><path d="M2 12.500h11M11 10l2.500 2.500L11 15" stroke="#000" /></Ico>
        </span>
        <span className="flex h-4 w-4 items-center border-l border-t border-[#9a9a9a]">
          <Ico><path d="M1 1h13v7H1z" fill="#111" /><path d="M3.500 3v4M6.500 3v4M9.500 3v4M12.500 3v4" stroke="#fff" /><path d="M2 12.500h11M11 10l2.500 2.500L11 15" stroke="#000" /></Ico>
        </span>
        <span className="flex h-4 w-10 flex-col items-center border-l border-t border-[#9a9a9a] text-[9px] leading-[10px] text-[#8c8c8c]">
          S/card
          <svg width="14" height="5" viewBox="0 0 14 5" fill="none" stroke="#8c8c8c" aria-hidden="true"><path d="M0 2.500h13M10.500 0L13 2.500 10.500 5" /></svg>
        </span>
        <span className="flex h-4 w-[14px] items-center border-l border-t border-[#9a9a9a]">
          <svg width="12" height="8" viewBox="0 0 12 8" aria-hidden="true"><path d="M1 3h5V0l5 4-5 4V5H1z" /></svg>
        </span>
        <span className="h-4 w-[53px] border-l border-t border-[#9a9a9a]">Bal/unbal</span>
        <span className="h-4 w-[50px] bg-[#ff0000] text-center text-[#6a0a0a]">XLR</span>
        <span className="h-4 w-8 bg-[#ff0000] text-center text-[9px] leading-2 text-[#6a0a0a]">48k<br />16</span>
        <span className="h-4 w-4 bg-[#ff0000] text-center text-[11px] text-[#6a0a0a]">CS</span>
        <span className="h-4 w-[55px] bg-[#ff0000]" />
        <span className="h-4 w-[55px] border-l border-t border-[#9a9a9a]" />
      </div>
      <nav className="ml-1 flex h-[15px]">
        {[1, 2, 3, 4, 5].map((page) => (
          <button
            key={page}
            type="button"
            className={clsx(
              'flex w-11 items-center justify-center whitespace-nowrap rounded-b-[3px] border border-r-2 border-black leading-[13px]',
              page === 5 ? 'border-r text-[11px]' : 'text-[12px] font-bold',
            )}
          >
            Page {page}
          </button>
        ))}
      </nav>
    </footer>
  );
}

export default function App() {
  return (
    <div className="relative flex h-screen flex-col overflow-hidden border-b border-l border-r border-t-8 border-b-[#4a0a6a] border-l-black border-r-black border-t-black bg-[#ababab] font-['Roboto','Open_Sans',sans-serif]">
      <TitleBar />
      <nav className="flex h-[21px] shrink-0 items-center border-b border-[#9a9a9a] bg-white">
        {MENUS.map(([before, key, after]) => (
          <button key={key + after} type="button" className="px-[7px] text-[12px] leading-4 text-[#1a1a1a]">
            {before}<u className="underline-offset-2">{key}</u>{after}
          </button>
        ))}
      </nav>
      <MainToolbar />
      <div className="flex h-[27px] shrink-0 items-center gap-[5px] border-b-2 border-[#7c7c7c] bg-[#f0f0f0] pl-2 pt-px">
        {SHORTCUTS.map((name) => (
          <button
            key={name}
            type="button"
            className="h-[21px] border border-b-2 border-r-2 border-b-[#6c6c6c] border-l-white border-r-[#6c6c6c] border-t-white px-2 font-['Liberation_Sans',Arial,sans-serif] text-[11px] leading-4 text-black"
          >
            {name}
          </button>
        ))}
      </div>
      <main className="flex min-h-0 flex-1 flex-col">
        <TraceWindow />
        <div className="flex h-[33px] shrink-0 items-start gap-px pl-[2px] pt-[5px]">
          <MinimisedWindow title="An..." />
          <MinimisedWindow title="Sw..." />
        </div>
      </main>
      <StatusBar />
      <svg width="12" height="19" viewBox="0 0 12 19" className="pointer-events-none absolute left-[777px] -top-1" aria-hidden="true">
        <path d="M.5.500v15l3.500-3.300 2.400 5.600 2.400-1-2.400-5.500h4.800z" fill="#fff" stroke="#000" />
      </svg>
    </div>
  );
}
